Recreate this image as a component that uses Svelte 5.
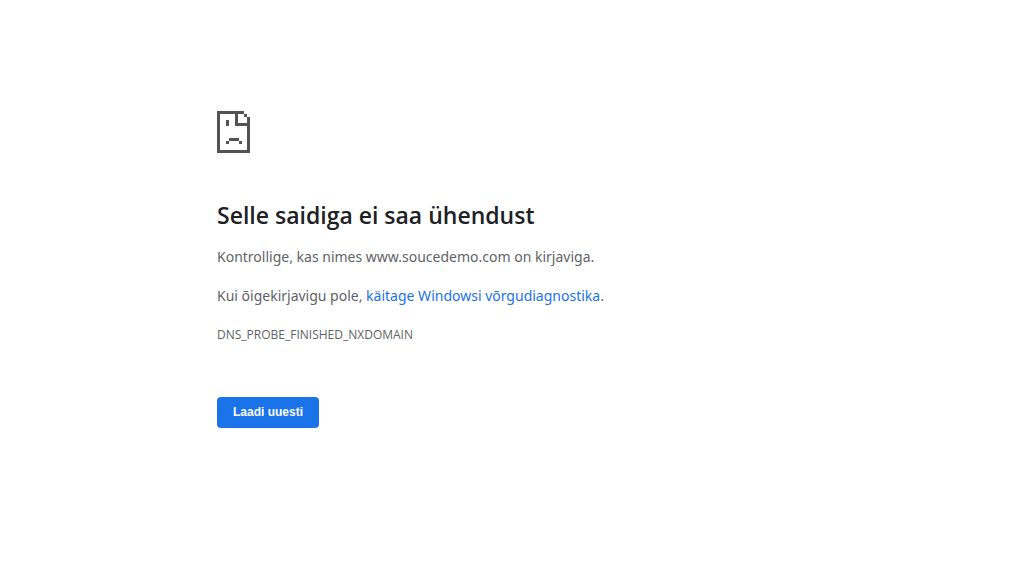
<script>
  function reload() {
    location.reload();
  }
</script>

<main>
  <svg class="icon" viewBox="0 0 33 42" shape-rendering="crispEdges" aria-hidden="true">
    <path fill="#535353" d="M0 0H27V3H21V12H30V6H33V42H0ZM3 3V39H30V15H18V3Z" fill-rule="evenodd" />
    <path fill="#535353" d="M27 3H30V6H27ZM9 9H12V15H9ZM12 27H22V30H12ZM9 30H12V33H9ZM22 30H25V33H22Z" />
  </svg>
  <h1>Selle saidiga ei saa ühendust</h1>
  <p>Kontrollige, kas nimes www.soucedemo.com on kirjaviga.</p>
  <p>Kui õigekirjavigu pole, <a href="#diagnose">käitage Windowsi võrgudiagnostika</a>.</p>
  <div class="code">DNS_PROBE_FINISHED_NXDOMAIN</div>
  <button type="button" onclick={reload}>Laadi uuesti</button>
</main>

<style>
  :global(body) {
    background: #fff;
  }
  main {
    box-sizing: border-box;
    max-width: 600px;
    margin: 0 auto;
    padding: 111px 0 40px;
    color: #5f6368;
    font: 14px/24px "Noto Sans", "Open Sans", sans-serif;
  }
  .icon {
    display: block;
    width: 33px;
    height: 42px;
  }
  h1 {
    margin: 48px 0 16px;
    color: #202124;
    font-family: "Open Sans", "Noto Sans", sans-serif;
    font-size: 23px;
    font-weight: 600;
    line-height: 28px;
  }
  p {
    margin: 0 0 15px;
  }
  a {
    color: #1a73e8;
    text-decoration: none;
  }
  .code {
    font-family: "Open Sans", "Noto Sans", sans-serif;
    font-size: 12px;
  }
  button {
    margin-top: 50px;
    padding: 8px 16px;
    border: 0;
    border-radius: 4px;
    background: #1a73e8;
    color: #fff;
    font: bold 12px/15px "Liberation Sans", Arial, sans-serif;
    cursor: pointer;
  }
</style>
